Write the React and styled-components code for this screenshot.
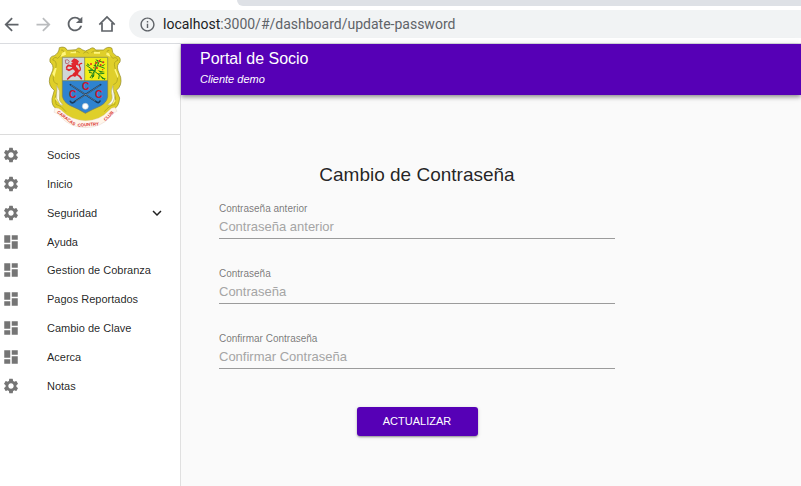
import React from "react";
import styled, { createGlobalStyle } from "styled-components";
import { MdArrowBack, MdArrowForward, MdRefresh, MdSettings, MdDashboard, MdExpandMore, MdInfoOutline } from "react-icons/md";

const GlobalStyle = createGlobalStyle`
  *, *::before, *::after { box-sizing: border-box; }
  body { margin: 0; background: #fafafa; color: rgba(0, 0, 0, 0.87); font-family: "Liberation Sans", Arial, sans-serif; }
  #root { min-height: 100vh; display: flex; }
`;

const Page = styled.div`
  flex: 1;
  display: flex;
  flex-direction: column;
  min-width: 0;
`;

const BrowserChrome = styled.header`
  background: #fff;
  border-bottom: 1px solid #dadce0;
`;

const TabStrip = styled.div`
  height: 6px;
  margin-left: 237px;
  background: #dee1e6;
  border-bottom-left-radius: 8px;
`;

const Toolbar = styled.div`
  display: flex;
  align-items: center;
  height: 37px;
  padding: 4px 0 5px 2px;
`;

const NavButton = styled.button`
  display: flex;
  align-items: center;
  justify-content: center;
  width: 32px;
  height: 28px;
  padding: 0 14px 0 0;
  border: 0;
  background: none;
  color: #5f6368;
  flex: none;
  &:disabled { color: #babcbe; }
  svg { flex: none; }
`;

const AddressBar = styled.div`
  flex: 1;
  display: flex;
  align-items: center;
  gap: 7px;
  height: 28px;
  margin-left: -1px;
  padding-left: 10px;
  border-radius: 14px 0 0 14px;
  background: #f1f3f4;
  color: #5f6368;
`;

const Url = styled.span`
  font: 14px/20px Roboto, "Noto Sans", sans-serif;
  color: #5f6368;
  b { font-weight: 400; color: #202124; }
`;

const Shell = styled.div`
  flex: 1;
  display: flex;
`;

const Sidebar = styled.aside`
  width: 181px;
  flex: none;
  background: #fff;
  border-right: 1px solid #e0e0e0;
`;

const LogoArea = styled.div`
  display: flex;
  justify-content: center;
  border-bottom: 1px solid #dcdcdc;
`;

const Menu = styled.ul`
  display: grid;
  grid-auto-rows: 1fr;
  min-height: 259px;
  margin: 6px 0 0;
  padding: 0;
  list-style: none;
`;

const MenuLink = styled.a`
  display: flex;
  align-items: center;
  height: 100%;
  padding: 0 14px 0 2px;
  color: rgba(0, 0, 0, 0.87);
  font-size: 11px;
  line-height: 16px;
  text-decoration: none;
`;

const MenuIcon = styled.span`
  display: flex;
  width: 45px;
  flex: none;
  color: #757575;
`;

const MenuText = styled.span`
  flex: 1;
`;

const Content = styled.div`
  flex: 1;
  min-width: 0;
`;

const AppBar = styled.div`
  height: 51px;
  padding: 5px 19px;
  background: #5600b6;
  color: #fff;
  box-shadow: 0 2px 4px -1px rgba(0,0,0,.3), 0 3px 4px rgba(0,0,0,.14), 0 1px 8px rgba(0,0,0,.12);
`;

const AppTitle = styled.h1`
  margin: 0;
  font-size: 16px;
  font-weight: 400;
  line-height: 20px;
`;

const UserName = styled.div`
  font-size: 11px;
  font-style: italic;
  line-height: 20px;
`;

const Main = styled.main`
  padding: 67px 38px 0;
`;

const Form = styled.form`
  display: flex;
  flex-direction: column;
  max-width: 396px;
`;

const FormTitle = styled.h2`
  margin: 0 0 16px;
  font-size: 19px;
  font-weight: 400;
  line-height: 26px;
  text-align: center;
`;

const Field = styled.div`
  display: flex;
  flex-direction: column;
  height: 35px;
  margin-bottom: 30px;
`;

const Label = styled.label`
  color: rgba(0, 0, 0, 0.54);
  font-size: 10px;
  line-height: 10px;
`;

const Input = styled.input`
  flex: 1;
  width: 100%;
  min-height: 0;
  padding: 4px 0 2px;
  border: 0;
  border-bottom: 1px solid #9b9b9b;
  outline: 0;
  background: transparent;
  color: inherit;
  font: 13px/18px "Liberation Sans", Arial, sans-serif;
  &::placeholder { color: #a5a5a5; opacity: 1; }
`;

const SubmitButton = styled.button`
  align-self: center;
  margin-top: 8px;
  width: 121px;
  height: 29px;
  padding: 0 0 2px;
  border: 0;
  border-radius: 3px;
  background: #5600b6;
  color: #fff;
  font: 11px/20px "Liberation Sans", Arial, sans-serif;
  text-transform: uppercase;
  box-shadow: 0 2px 2px -1px rgba(0,0,0,.2), 0 1px 2px rgba(0,0,0,.2), 0 1px 4px rgba(0,0,0,.12);
`;

function HomeIcon() {
  return (
    <svg width="18" height="18" viewBox="0 0 18 18" fill="none" stroke="currentColor" strokeWidth="1.7" aria-hidden="true">
      <path d="M1.300 9.700 9 2l7.700 7.700M4 8v8h10V8" />
    </svg>
  );
}

function Crest() {
  return (
    <svg width="90" height="90" viewBox="15 12 270 270" role="img" aria-label="Caracas Country Club">
      <path
        d="M58 23 Q75 17 82 31 L108 29 Q116 19 126 29 L136 33 L148 28 Q160 18 167 30 L190 30 Q204 17 216 25 Q214 39 229 48 Q244 50 240 66 Q229 75 234 91 L242 112 Q247 137 229 151 L239 174 Q237 200 221 208 Q200 216 187 235 Q164 259 136 260 Q106 260 88 235 Q72 215 50 207 Q34 198 36 176 L43 151 Q24 137 29 113 L38 91 Q42 75 30 66 Q27 49 43 47 Q57 39 58 23Z"
        fill="#dfcf2a" stroke="#8c8420" strokeWidth="2"
      />
      <g fill="none" stroke="#a39a20" strokeWidth="2">
        <path d="M63 31Q69 26 73 40Q61 46 53 55Q43 48 38 60Q51 62 48 80L40 107Q37 129 54 133M51 155Q42 172 48 193Q64 196 78 215" />
        <path d="M208 31Q203 27 199 40Q211 46 219 55Q230 49 234 61Q220 64 224 80L232 108Q235 129 220 134M222 156Q231 173 224 194Q209 195 193 215" />
        <path d="M93 38q14-10 26 0M130 40l8-5 8 5M154 38q11-10 26 0" />
      </g>
      <g fill="#fff67c">
        <path d="M67 38l9-4 2 10-17 7zM93 36l15-2v6H90zM162 35l18 1v5h-18zM199 37l8 3 5 11-13-6zM37 101l8-18 5 2-7 27zM227 86l8 21-2 8-10-26zM45 177l7-13 2 23zM219 166l8 17-8 9z" />
      </g>
      <path d="M50 137Q62 151 58 168Q55 184 69 194Q61 199 57 188Q47 177 50 160Q52 149 50 137ZM219 137Q211 152 216 166Q219 184 202 194Q212 199 219 187Q227 175 222 160Q218 149 219 137Z" fill="#fffdf0" stroke="#b0ae80" strokeWidth="2" />
      <path d="M67 52H134V122H67Z" fill="#d0d5d8" />
      <path d="M134 52H203V122H134Z" fill="#f2ee16" />
      <path d="M67 122H203V170Q200 188 181 198Q156 209 136 220Q116 207 91 197Q71 187 67 169Z" fill="#2f83cf" />
      <path d="M67 52H203V170Q200 188 181 198Q156 209 136 220Q116 207 91 197Q71 187 67 169ZM134 52V123M67 122H203" fill="none" stroke="#777d55" strokeWidth="2" />
      <g fill="none" stroke="#df242b" strokeLinecap="round" strokeLinejoin="round">
        <path d="M105 66Q98 82 107 87Q116 95 104 104" strokeWidth="12" />
        <path d="M101 80L85 76 80 82M99 85L87 91 80 87M107 101L119 109 124 116M103 104L91 109 83 117" strokeWidth="5" />
        <path d="M112 94Q126 92 119 80Q115 72 125 70" strokeWidth="4" />
      </g>
      <path d="M97 60l5-5 8 3 7 6-3 5 4 8-10-2-8 3-8-7 7-3-6-4z" fill="#e12931" />
      <path d="M76 60Q85 56 88 65Q85 75 77 70Z" fill="none" stroke="#b8737b" strokeWidth="3" />
      <g fill="none" stroke="#23871d" strokeWidth="3">
        <path d="M139 76Q159 89 195 119M150 114Q168 90 181 58M145 91l15 1M157 99l-10-2M165 94l1-24M174 102l19-2M178 105l-2 12M163 91l-3 20M174 77l20 8M176 70l-11-5M180 64l12 4" />
      </g>
      <g fill="#23831c">
        <path d="M142 69l9 9-9-2zM157 86l-10 14 2-11zM173 66l-7-8 9 3zM184 77l13-6-8 8zM173 91l22 5-13 2zM164 104l-9 14 1-12zM182 110l17 7-11 1zM169 80l-10-4 9-2z" />
      </g>
      <g fill="#e52a24">
        <circle cx="153" cy="72" r="3" /><circle cx="168" cy="69" r="3" /><circle cx="178" cy="63" r="3" />
        <circle cx="182" cy="75" r="3" /><circle cx="171" cy="84" r="3" /><circle cx="190" cy="67" r="3" />
        <circle cx="161" cy="83" r="2" /><circle cx="188" cy="89" r="2" />
      </g>
      <path d="M91 134L167 184Q176 192 180 183M182 134L105 184Q96 193 91 184" fill="none" stroke="#17395a" strokeWidth="5" strokeLinecap="round" />
      <path d="M93 135L166 183M179 136L107 184" fill="none" stroke="#d5dce0" strokeWidth="1" />
      <g fill="#c9152c" fontFamily="Liberation Sans, sans-serif" fontWeight="700" fontSize="31" textAnchor="middle">
        <text x="137" y="151">C</text><text x="98" y="174">C</text><text x="176" y="174">C</text>
      </g>
      <circle cx="136" cy="199" r="9" fill="#fff" stroke="#b8c6ce" strokeWidth="2" />
      <path d="M45 204Q55 202 64 211Q91 240 136 242Q181 241 205 213Q216 201 226 203L231 214Q218 218 210 231Q184 262 137 263Q89 262 61 230Q52 218 42 217Z" fill="#fff6eb" stroke="#dcc3bc" strokeWidth="1" />
      <g fill="#d82d2d" fontFamily="Liberation Sans, sans-serif" fontWeight="700" fontSize="13" textAnchor="middle">
        <text transform="translate(76 238) rotate(37)">CARACAS</text>
        <text transform="translate(145 258) rotate(-4)">COUNTRY</text>
        <text transform="translate(209 231) rotate(-46)">CLUB</text>
      </g>
    </svg>
  );
}

const menu = [
  { text: "Socios", icon: MdSettings },
  { text: "Inicio", icon: MdSettings },
  { text: "Seguridad", icon: MdSettings, expandable: true },
  { text: "Ayuda", icon: MdDashboard },
  { text: "Gestion de Cobranza", icon: MdDashboard },
  { text: "Pagos Reportados", icon: MdDashboard },
  { text: "Cambio de Clave", icon: MdDashboard },
  { text: "Acerca", icon: MdDashboard },
  { text: "Notas", icon: MdSettings },
];

const fields = [
  { id: "previous", text: "Contraseña anterior" },
  { id: "password", text: "Contraseña" },
  { id: "confirm", text: "Confirmar Contraseña" },
];

export default function App() {
  return (
    <Page>
      <GlobalStyle />
      <BrowserChrome>
        <TabStrip />
        <Toolbar>
          <NavButton aria-label="Atrás"><MdArrowBack size={21} /></NavButton>
          <NavButton aria-label="Adelante" disabled><MdArrowForward size={21} /></NavButton>
          <NavButton aria-label="Recargar"><MdRefresh size={22} /></NavButton>
          <NavButton aria-label="Inicio"><HomeIcon /></NavButton>
          <AddressBar>
            <MdInfoOutline size={17} />
            <Url><b>localhost</b>:3000/#/dashboard/update-password</Url>
          </AddressBar>
        </Toolbar>
      </BrowserChrome>
      <Shell>
        <Sidebar>
          <LogoArea><Crest /></LogoArea>
          <nav>
            <Menu>
              {menu.map(({ text, icon: Icon, expandable }) => (
                <li key={text}>
                  <MenuLink href="#">
                    <MenuIcon><Icon size={18} /></MenuIcon>
                    <MenuText>{text}</MenuText>
                    {expandable && <MdExpandMore size={18} />}
                  </MenuLink>
                </li>
              ))}
            </Menu>
          </nav>
        </Sidebar>
        <Content>
          <AppBar>
            <AppTitle>Portal de Socio</AppTitle>
            <UserName>Cliente demo</UserName>
          </AppBar>
          <Main>
            <Form onSubmit={(e) => e.preventDefault()}>
              <FormTitle>Cambio de Contraseña</FormTitle>
              {fields.map(({ id, text }) => (
                <Field key={id}>
                  <Label htmlFor={id}>{text}</Label>
                  <Input id={id} type="password" placeholder={text} />
                </Field>
              ))}
              <SubmitButton type="submit">Actualizar</SubmitButton>
            </Form>
          </Main>
        </Content>
      </Shell>
    </Page>
  );
}
